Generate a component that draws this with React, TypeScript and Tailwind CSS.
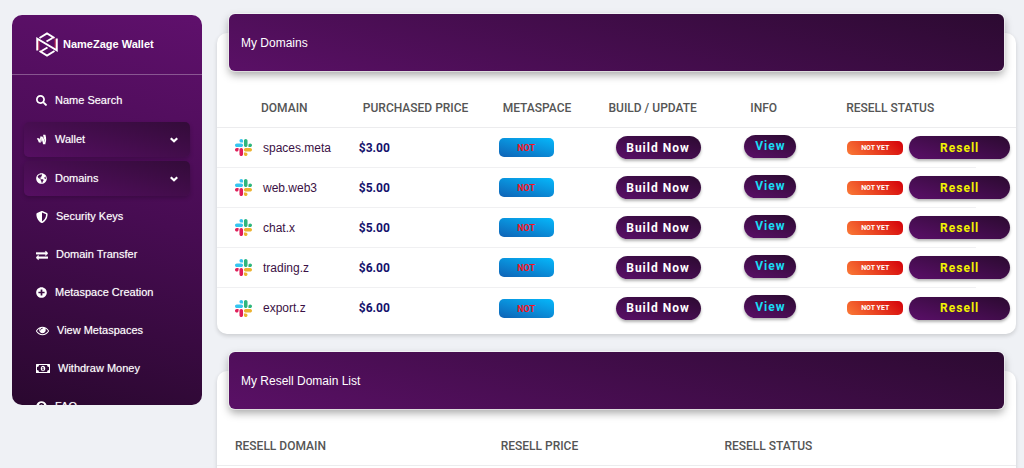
import React from "react";
import {
  FaSearch,
  FaGoogleWallet,
  FaGlobeAmericas,
  FaShieldAlt,
  FaPlusCircle,
  FaQuestionCircle,
} from "react-icons/fa";

function ExchangeIcon() {
  return (
    <svg viewBox="0 0 1792 1792" className="h-3 w-3" fill="currentColor" stroke="currentColor" strokeWidth="60" aria-hidden="true">
      <path d="M1792 1184v192q0 13-9.5 22.5t-22.5 9.5h-1376v192q0 13-9.5 22.5t-22.5 9.5q-12 0-24-10l-319-320q-9-9-9-22 0-14 9-23l320-320q9-9 23-9 13 0 22.5 9.5t9.5 22.5v192h1376q13 0 22.5 9.5t9.5 22.5zm0-544q0 14-9 23l-320 320q-9 9-23 9-13 0-22.5-9.5t-9.5-22.5v-192h-1376q-13 0-22.5-9.5t-9.5-22.5v-192q0-13 9.5-22.5t22.5-9.5h1376v-192q0-14 9-23t23-9q12 0 24 10l319 319q9 9 9 23z" />
    </svg>
  );
}

function EyeIcon() {
  return (
    <svg viewBox="0 0 1792 1792" className="h-[13px] w-[13px]" fill="currentColor" aria-hidden="true">
      <path d="M1664 960q-152-236-381-353 61 104 61 225 0 185-131.5 316.5t-316.5 131.5-316.5-131.5-131.5-316.5q0-121 61-225-229 117-381 353 133 205 333.5 326.5t434.5 121.5 434.5-121.5 333.5-326.5zm-720-384q0-20-14-34t-34-14q-125 0-214.5 89.5t-89.5 214.5q0 20 14 34t34 14 34-14 14-34q0-86 61-147t147-61q20 0 34-14t14-34zm848 384q0 34-20 69-140 230-376.5 368.5t-499.5 138.5-499.5-139-376.5-368q-20-35-20-69t20-69q140-229 376.5-368t499.5-139 499.5 139 376.5 368q20 35 20 69z" />
    </svg>
  );
}

function MoneyIcon() {
  return (
    <svg viewBox="0 0 28 18" className="h-[9px] w-[14px]" fill="currentColor" aria-hidden="true">
      <path
        fillRule="evenodd"
        d="M1 0h26a1 1 0 0 1 1 1v16a1 1 0 0 1-1 1H1a1 1 0 0 1-1-1V1a1 1 0 0 1 1-1zM6 2a4 4 0 0 1-4 4v6a4 4 0 0 1 4 4h16a4 4 0 0 1 4-4V6a4 4 0 0 1-4-4z"
      />
      <path fillRule="evenodd" d="M14 3.500c2.600 0 4.500 2.500 4.500 5.500s-1.900 5.500-4.500 5.500S9.500 12 9.500 9s1.900-5.500 4.500-5.500zM13.500 6L11.500 7.600l.8 1 .9-.6v3H12v1.300h4V11h-1.100V6z" />
    </svg>
  );
}

function ChevronIcon() {
  return (
    <svg viewBox="0 0 16 12" className="h-[6px] w-2" fill="none" stroke="currentColor" strokeWidth="4.500" aria-hidden="true">
      <path d="M1.500 2.500L8 8.500l6.500-6" />
    </svg>
  );
}

function BrandLogo() {
  return (
    <svg viewBox="0 0 44 50" className="h-[25px] w-[22px]" fill="none" aria-hidden="true">
      <path d="M5.500 17v19M38.500 14v19M8 37l6 4M30 9l6 4" stroke="#b0204f" strokeWidth="3" />
      <path
        d="M7 12L22 3l15 9M37 38L22 47 7 38M2.500 37V13.500L41.500 36.500V13M33 12L21 19M11 38l12-7"
        stroke="#fff"
        strokeWidth="4"
      />
    </svg>
  );
}

function SlackMark() {
  return (
    <svg viewBox="0 0 122.8 122.8" className="h-[17px] w-[17px]" aria-hidden="true">
      <path fill="#E01E5A" d="M25.800 77.600c0 7.100-5.800 12.900-12.900 12.900S0 84.700 0 77.600s5.800-12.900 12.900-12.900h12.900v12.900zm6.500 0c0-7.100 5.800-12.900 12.900-12.900s12.900 5.800 12.900 12.900v32.300c0 7.100-5.800 12.900-12.900 12.900s-12.900-5.800-12.900-12.900V77.600z" />
      <path fill="#36C5F0" d="M45.200 25.800c-7.100 0-12.900-5.800-12.900-12.900S38.100 0 45.200 0s12.900 5.800 12.900 12.900v12.900H45.200zm0 6.500c7.100 0 12.900 5.800 12.900 12.900s-5.800 12.900-12.900 12.900H12.900C5.800 58.100 0 52.300 0 45.200s5.800-12.900 12.900-12.900h32.300z" />
      <path fill="#2EB67D" d="M97 45.200c0-7.100 5.800-12.900 12.900-12.900s12.900 5.800 12.900 12.900-5.800 12.900-12.900 12.900H97V45.200zm-6.500 0c0 7.100-5.800 12.900-12.900 12.900s-12.900-5.800-12.900-12.900V12.900C64.700 5.800 70.500 0 77.600 0s12.900 5.800 12.900 12.900v32.300z" />
      <path fill="#ECB22E" d="M77.600 97c7.100 0 12.900 5.800 12.900 12.900s-5.800 12.900-12.900 12.900-12.900-5.800-12.900-12.900V97h12.900zm0-6.500c-7.100 0-12.900-5.800-12.900-12.900s5.800-12.900 12.900-12.900h32.300c7.100 0 12.900 5.800 12.900 12.900s-5.800 12.900-12.900 12.900H77.600z" />
    </svg>
  );
}

type NavItem = { label: string; icon: React.ReactNode; expandable?: boolean };

const navItems: NavItem[] = [
  { label: "Name Search", icon: <FaSearch size={11} /> },
  { label: "Wallet", icon: <FaGoogleWallet size={11} />, expandable: true },
  { label: "Domains", icon: <FaGlobeAmericas size={11} />, expandable: true },
  { label: "Security Keys", icon: <FaShieldAlt size={12} /> },
  { label: "Domain Transfer", icon: <ExchangeIcon /> },
  { label: "Metaspace Creation", icon: <FaPlusCircle size={11} /> },
  { label: "View Metaspaces", icon: <EyeIcon /> },
  { label: "Withdraw Money", icon: <MoneyIcon /> },
  { label: "FAQ", icon: <FaQuestionCircle size={11} /> },
];

const domains = [
  { name: "spaces.meta", price: "$3.00" },
  { name: "web.web3", price: "$5.00" },
  { name: "chat.x", price: "$5.00" },
  { name: "trading.z", price: "$6.00" },
  { name: "export.z", price: "$6.00" },
];

const pill =
  "h-[23px] shrink-0 rounded-full bg-linear-[15deg] from-[#5a0f68] to-[#2b0a30] text-[12px] leading-none font-bold tracking-[1px] shadow-[0_2px_3px_rgba(0,0,0,0.3)]";

const navText = "[text-shadow:0_0_1px_rgba(255,255,255,0.5)]";

function Sidebar() {
  return (
    <aside className="h-[calc(100vh-78px)] w-[190px] shrink-0 overflow-hidden rounded-[10px] bg-linear-[195deg] from-[#5f106c] via-[#470c52] to-[#2a082f] font-['Liberation_Sans',sans-serif] text-[11px] text-white">
      <div className="flex h-[60px] items-center gap-[5px] border-b border-white/30 pl-6 font-bold">
        <BrandLogo />
        <span>NameZage Wallet</span>
      </div>
      <nav className="flex flex-col gap-[3px] px-3 pt-2">
        {navItems.map((item) =>
          item.expandable ? (
            <button
              key={item.label}
              type="button"
              className={`${navText} mt-px flex h-[35px] shrink-0 items-center gap-2 rounded-[5px] bg-linear-[15deg] from-[#560f62] to-[#330b39] px-3 text-left shadow-[0_2px_4px_rgba(0,0,0,0.2)]`}
            >
              {item.icon}
              <span className="grow">{item.label}</span>
              <ChevronIcon />
            </button>
          ) : (
            <a key={item.label} href="#" className={`${navText} flex h-[35px] shrink-0 items-center gap-2 px-3`}>
              {item.icon}
              <span>{item.label}</span>
            </a>
          ),
        )}
      </nav>
    </aside>
  );
}

function Card({ title, children }: { title: string; children: React.ReactNode }) {
  return (
    <section className="rounded-[10px] bg-white shadow-[0_2px_4px_rgba(0,0,0,0.15)]">
      <div className="px-3">
        <h2 className="-mt-[19px] flex h-[57px] items-center rounded-md bg-linear-[15deg] from-[#5a1066] to-[#2c0a31] px-3 font-['Liberation_Sans',sans-serif] text-[12px] text-white shadow-[0_0_0_1px_rgba(255,255,255,0.5),0_4px_8px_rgba(0,0,0,0.35)]">
          {title}
        </h2>
      </div>
      {children}
    </section>
  );
}

const th = "pt-[2px] text-left text-[12px] font-medium text-[#555]";
const td = "border-b border-[#f0f0f2] p-0 group-last:border-0";

function DomainsTable() {
  return (
    <table className="mt-4 w-full table-fixed border-separate border-spacing-0">
      <colgroup>
        <col className="w-[17%]" />
        <col className="w-[18%]" />
        <col className="w-[14%]" />
        <col className="w-[16%]" />
        <col className="w-[13%]" />
        <col className="w-[17%]" />
        <col className="w-[5%]" />
      </colgroup>
      <thead>
        <tr className="h-[41px] [&>th]:border-b [&>th]:border-[#ececee]">
          <th className={`${th} pl-11`}>DOMAIN</th>
          <th className={`${th} pl-[10px]`}>PURCHASED PRICE</th>
          <th className={`${th} pl-[6px]`}>METASPACE</th>
          <th className={th}>BUILD / UPDATE</th>
          <th className={`${th} pl-[14px]`}>INFO</th>
          <th className={`${th} pl-[6px]`}>RESELL STATUS</th>
          <th className={th} aria-label="Actions" />
        </tr>
      </thead>
      <tbody>
        {domains.map((d) => (
          <tr key={d.name} className="group h-10">
            <td className={td}>
              <div className="flex items-center gap-[11px] pl-[18px]">
                <SlackMark />
                <a href="#" className="font-['Liberation_Sans',sans-serif] text-[12px] text-[#3b1145]">
                  {d.name}
                </a>
              </div>
            </td>
            <td className={`${td} text-[12px] font-bold text-[#14106b]`}>
              <div className="pl-[6px]">{d.price}</div>
            </td>
            <td className={td}>
              <div className="flex pl-[2px]">
                <span className="flex h-[19px] w-[55px] items-center justify-center rounded-[5px] bg-linear-[15deg] from-[#0f62b5] to-[#05b8fb] pt-[2px] text-[9px] leading-none font-bold text-[#f01522]">
                  NOT
                </span>
              </div>
            </td>
            <td className={td}>
              <div className="flex pl-[7px]">
                <button type="button" className={`${pill} w-[85px] text-white`}>
                  Build Now
                </button>
              </div>
            </td>
            <td className={td}>
              <div className="flex pb-[3px] pl-2">
                <button type="button" className={`${pill} w-[52px] text-[#18dcf4]`}>
                  View
                </button>
              </div>
            </td>
            <td className={td}>
              <div className="flex items-center gap-[6px] pl-[7px]">
                <span className="flex h-[14px] w-[56px] shrink-0 items-center justify-center rounded-[5px] bg-linear-[45deg] from-[#fb7a36] to-[#d40009] pt-px text-[7px] leading-none font-bold text-white">
                  NOT YET
                </span>
                <button type="button" className={`${pill} w-[101px] text-[#f2f200]`}>
                  Resell
                </button>
              </div>
            </td>
            <td className="p-0" />
          </tr>
        ))}
      </tbody>
    </table>
  );
}

function ResellTable() {
  return (
    <table className="mt-4 w-full table-fixed border-separate border-spacing-0">
      <colgroup>
        <col className="w-[34%]" />
        <col className="w-[28%]" />
        <col className="w-[38%]" />
      </colgroup>
      <thead>
        <tr className="h-[41px] [&>th]:border-b [&>th]:border-[#ececee]">
          <th className={`${th} pl-[18px]`}>RESELL DOMAIN</th>
          <th className={`${th} pl-3`}>RESELL PRICE</th>
          <th className={`${th} pl-3`}>RESELL STATUS</th>
        </tr>
      </thead>
    </table>
  );
}

export default function App() {
  return (
    <div className="flex h-screen items-start gap-[15px] overflow-hidden bg-[#eff1f5] pt-[15px] pr-2 pl-3 font-[Roboto,sans-serif]">
      <Sidebar />
      <main className="flex min-w-0 grow flex-col gap-[37px] pt-[18px]">
        <Card title="My Domains">
          <DomainsTable />
          <div className="h-[6px]" />
        </Card>
        <Card title="My Resell Domain List">
          <ResellTable />
          <div className="h-16" />
        </Card>
      </main>
    </div>
  );
}
